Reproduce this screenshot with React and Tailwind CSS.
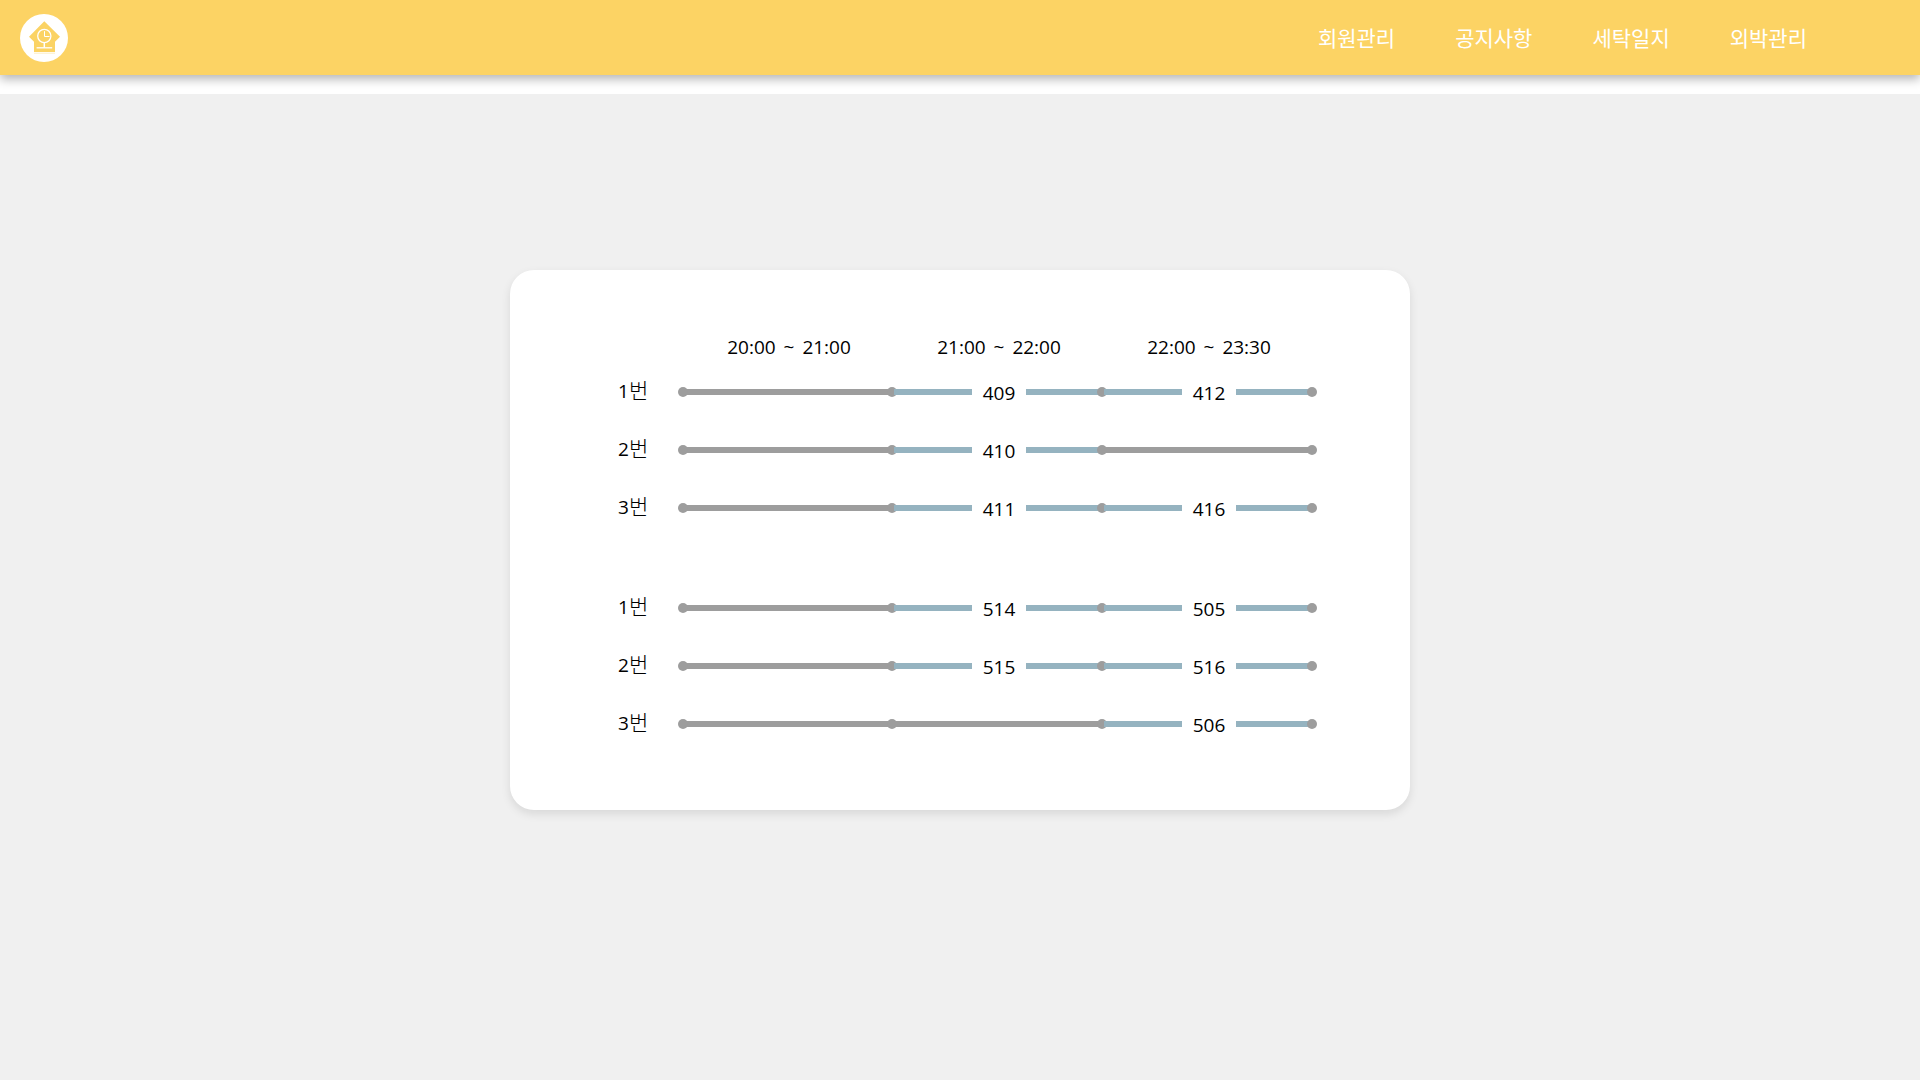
const NAV_ITEMS = ["회원관리", "공지사항", "세탁일지", "외박관리"];

const TIMES = [
  { start: "20:00", end: "21:00" },
  { start: "21:00", end: "22:00" },
  { start: "22:00", end: "23:30" },
];

const FLOORS = [
  {
    id: "floor-4",
    machines: [
      { number: 1, rooms: [null, "409", "412"] },
      { number: 2, rooms: [null, "410", null] },
      { number: 3, rooms: [null, "411", "416"] },
    ],
  },
  {
    id: "floor-5",
    machines: [
      { number: 1, rooms: [null, "514", "505"] },
      { number: 2, rooms: [null, "515", "516"] },
      { number: 3, rooms: [null, null, "506"] },
    ],
  },
];

function Logo() {
  return (
    <svg viewBox="0 0 48 48" className="block size-12" aria-hidden="true">
      <circle cx="24" cy="24" r="24" fill="#fff" />
      <path d="M24.3 7.2 40 22.8l-5 5V38H14V27.8l-5-5z" fill="#fbd364" />
      <path d="M14 39.2h21" stroke="#fdeec4" strokeWidth="1" />
      <g fill="none" stroke="#fff">
        <circle cx="24.3" cy="22" r="6.6" strokeWidth="1.3" />
        <path d="M24.5 17.2v5.3h5" strokeWidth="1" />
        <path d="M24.3 28.6v5" strokeWidth="1.5" />
        <path d="M16.6 33.8h15.6" strokeWidth="1.3" />
      </g>
    </svg>
  );
}

function Header() {
  return (
    <header className="relative flex h-[75px] items-center justify-between bg-[#fcd364] pr-[113px] pl-5 shadow-[0_4px_10px_rgba(0,0,0,0.3)]">
      <a href="#" aria-label="홈">
        <Logo />
      </a>
      <nav className="flex gap-[60px] text-[21px] leading-8 text-white">
        {NAV_ITEMS.map((item) => (
          <a key={item} href="#">
            {item}
          </a>
        ))}
      </nav>
    </header>
  );
}

function Dot({ className }) {
  return (
    <span className={`absolute top-1/2 size-2.5 -translate-y-1/2 rounded-full bg-[#9d9d9d] ${className}`} />
  );
}

function Slot({ room, first }) {
  return (
    <div className="relative flex h-[58px] items-center">
      {room ? (
        <>
          <span className="h-1.5 flex-1 bg-[#95b3c0]" />
          <span className="w-[54px] pt-0.5 text-center">{room}</span>
          <span className="h-1.5 flex-1 bg-[#95b3c0]" />
        </>
      ) : (
        <span className="h-1.5 flex-1 bg-[#9d9d9d]" />
      )}
      {first && <Dot className="-left-1.5" />}
      <Dot className="-right-[3px]" />
    </div>
  );
}

export default function App() {
  return (
    <div className="flex min-h-screen flex-col bg-white font-['Open_Sans','Noto_Sans_CJK_KR',sans-serif] text-black">
      <Header />
      <main className="mt-[19px] flex flex-1 items-center justify-center bg-[#f0f0f0] pb-[94px]">
        <section className="w-full max-w-[900px] rounded-3xl bg-white pt-[61px] pr-24 pb-[57px] pl-[108px] shadow-[0_4px_10px_rgba(0,0,0,0.1)]">
          <table className="w-full table-fixed border-collapse text-[19px] leading-6">
            <thead>
              <tr className="h-8">
                <td className="w-[66px] p-0" />
                {TIMES.map((time) => (
                  <th key={time.start} scope="col" className="p-0 text-center align-middle font-normal">
                    {time.start} <span className="mx-[3px]">~</span> {time.end}
                  </th>
                ))}
              </tr>
            </thead>
            {FLOORS.map((floor, index) => (
              <tbody key={floor.id}>
                {index > 0 && (
                  <tr aria-hidden="true">
                    <td colSpan={4} className="h-[42px] p-0" />
                  </tr>
                )}
                {floor.machines.map((machine) => (
                  <tr key={machine.number}>
                    <th scope="row" className="p-0 pb-1 text-left align-middle font-normal">
                      {machine.number}
                      <span className="text-[21px] leading-6 font-light">번</span>
                    </th>
                    {machine.rooms.map((room, i) => (
                      <td key={TIMES[i].start} className="p-0">
                        <Slot room={room} first={i === 0} />
                      </td>
                    ))}
                  </tr>
                ))}
              </tbody>
            ))}
          </table>
        </section>
      </main>
    </div>
  );
}
